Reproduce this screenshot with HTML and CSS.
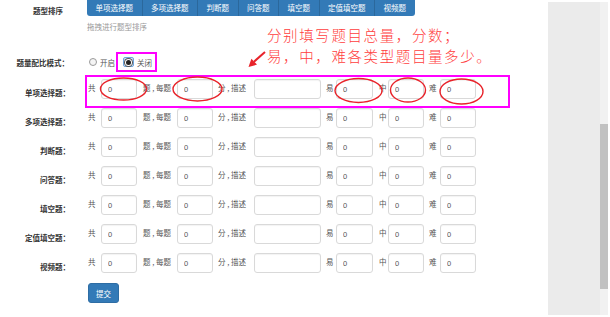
FILE: index.html
```html
<!DOCTYPE html>
<html lang="zh">
<head>
<meta charset="utf-8">
<title>题量配比</title>
<link rel="stylesheet" href="styles.css">
</head>
<body>
<div class="page">
  <main class="content">
    <div class="sort-row">
      <div class="label label-sort">题型排序</div>
      <div class="tabs">
        <span class="tab tab-first">单项选择题</span>
        <span class="tab">多项选择题</span>
        <span class="tab">判断题</span>
        <span class="tab">问答题</span>
        <span class="tab">填空题</span>
        <span class="tab">定值填空题</span>
        <span class="tab tab-last">视频题</span>
      </div>
    </div>
    <div class="hint">拖拽进行题型排序</div>

    <div class="mode-row">
      <div class="label label-mode">题量配比模式：</div>
      <div class="radios">
        <span class="radio-opt"><span class="radio"></span>开启</span>
        <span class="radio-opt"><span class="radio radio-checked"><span class="radio-dot"></span></span>关闭</span>
      </div>
    </div>

    <div class="rows">
      <div class="form-row">
        <div class="label">单项选择题：</div>
        <div class="fields">
          <span class="t t-gong">共</span><input class="in in-num" value="0"><span class="t t-per">题 , 每题</span><input class="in in-num" value="0"><span class="t t-desc">分 , 描述</span><input class="in in-desc" value=""><span class="t t-yi">易</span><input class="in in-num in-yi" value="0"><span class="t t-zhong">中</span><input class="in in-num" value="0"><span class="t t-nan">难</span><input class="in in-num" value="0">
        </div>
      </div>
      <div class="form-row">
        <div class="label">多项选择题：</div>
        <div class="fields">
          <span class="t t-gong">共</span><input class="in in-num" value="0"><span class="t t-per">题 , 每题</span><input class="in in-num" value="0"><span class="t t-desc">分 , 描述</span><input class="in in-desc" value=""><span class="t t-yi">易</span><input class="in in-num in-yi" value="0"><span class="t t-zhong">中</span><input class="in in-num" value="0"><span class="t t-nan">难</span><input class="in in-num" value="0">
        </div>
      </div>
      <div class="form-row">
        <div class="label">判断题：</div>
        <div class="fields">
          <span class="t t-gong">共</span><input class="in in-num" value="0"><span class="t t-per">题 , 每题</span><input class="in in-num" value="0"><span class="t t-desc">分 , 描述</span><input class="in in-desc" value=""><span class="t t-yi">易</span><input class="in in-num in-yi" value="0"><span class="t t-zhong">中</span><input class="in in-num" value="0"><span class="t t-nan">难</span><input class="in in-num" value="0">
        </div>
      </div>
      <div class="form-row">
        <div class="label">问答题：</div>
        <div class="fields">
          <span class="t t-gong">共</span><input class="in in-num" value="0"><span class="t t-per">题 , 每题</span><input class="in in-num" value="0"><span class="t t-desc">分 , 描述</span><input class="in in-desc" value=""><span class="t t-yi">易</span><input class="in in-num in-yi" value="0"><span class="t t-zhong">中</span><input class="in in-num" value="0"><span class="t t-nan">难</span><input class="in in-num" value="0">
        </div>
      </div>
      <div class="form-row">
        <div class="label">填空题：</div>
        <div class="fields">
          <span class="t t-gong">共</span><input class="in in-num" value="0"><span class="t t-per">题 , 每题</span><input class="in in-num" value="0"><span class="t t-desc">分 , 描述</span><input class="in in-desc" value=""><span class="t t-yi">易</span><input class="in in-num in-yi" value="0"><span class="t t-zhong">中</span><input class="in in-num" value="0"><span class="t t-nan">难</span><input class="in in-num" value="0">
        </div>
      </div>
      <div class="form-row">
        <div class="label">定值填空题：</div>
        <div class="fields">
          <span class="t t-gong">共</span><input class="in in-num" value="0"><span class="t t-per">题 , 每题</span><input class="in in-num" value="0"><span class="t t-desc">分 , 描述</span><input class="in in-desc" value=""><span class="t t-yi">易</span><input class="in in-num in-yi" value="0"><span class="t t-zhong">中</span><input class="in in-num" value="0"><span class="t t-nan">难</span><input class="in in-num" value="0">
        </div>
      </div>
      <div class="form-row">
        <div class="label">视频题：</div>
        <div class="fields">
          <span class="t t-gong">共</span><input class="in in-num" value="0"><span class="t t-per">题 , 每题</span><input class="in in-num" value="0"><span class="t t-desc">分 , 描述</span><input class="in in-desc" value=""><span class="t t-yi">易</span><input class="in in-num in-yi" value="0"><span class="t t-zhong">中</span><input class="in in-num" value="0"><span class="t t-nan">难</span><input class="in in-num" value="0">
        </div>
      </div>
    </div>

    <div class="actions">
      <button class="btn-submit" type="button">提交</button>
    </div>
  </main>
  <aside class="side"></aside>
  <div class="scrollbar"><div class="thumb"></div></div>

  <div class="annot">
    <svg class="annot-svg" width="610" height="317" viewBox="0 0 610 317">
      <rect x="117" y="53" width="39" height="18" fill="none" stroke="#ff00ff" stroke-width="2"/>
      <rect x="86" y="76" width="423" height="31" fill="none" stroke="#ff00ff" stroke-width="2"/>
      <g fill="none" stroke="#e8232a" stroke-width="1.4">
        <ellipse cx="123.5" cy="89" rx="23" ry="11"/>
        <ellipse cx="197.5" cy="89" rx="24.5" ry="12"/>
        <ellipse cx="358.5" cy="90.5" rx="23.5" ry="12"/>
        <ellipse cx="408" cy="90" rx="17.5" ry="12"/>
        <ellipse cx="461.5" cy="91.5" rx="21.5" ry="12.5"/>
      </g>
      <line x1="265" y1="52" x2="254" y2="61.7" stroke="#e8232a" stroke-width="2"/>
      <polygon points="248.5,67 251.4,58.8 257,64.6" fill="#e8232a"/>
    </svg>
    <div class="annot-text">
      <div class="annot-line">分别填写题目总量，分数；</div>
      <div class="annot-line">易，中，难各类型题目量多少。</div>
    </div>
  </div>
</div>
</body>
</html>
```

FILE: styles.css
```css
html, body {
  margin: 0;
  padding: 0;
  overflow: hidden;
  background: #ffffff;
}

body {
  font-family: "Liberation Sans", "Noto Sans CJK SC", sans-serif;
  font-size: 7.5px;
  color: #333333;
}

.page {
  position: relative;
  display: flex;
  width: 610px;
  height: 317px;
}

.content {
  width: 548px;
  flex: none;
}

.side {
  width: 52px;
  flex: none;
  margin: 2px 0 2px 0;
  background: #ebebeb;
}

.scrollbar {
  width: 8px;
  flex: none;
  margin: 2px 0 2px 0;
  background: #f1f1f1;
}

.thumb {
  margin-top: 122px;
  height: 165px;
  background: #c1c1c1;
}

/* labels */
.label {
  width: 70px;
  flex: none;
  text-align: right;
  font-weight: bold;
  color: #333333;
  font-family: "Noto Sans CJK SC", sans-serif;
}

/* sort row */
.sort-row {
  display: flex;
  height: 16px;
}

.label-sort {
  padding-top: 5px;
  width: 63px;
  margin-right: 24px;
}

.tabs {
  display: flex;
  height: 16px;
}

.tab {
  background: #337ab7;
  color: #ffffff;
  font-family: "Noto Sans CJK SC", sans-serif;
  line-height: 15px;
  height: 16px;
  padding: 0 8.5px;
  border-left: 1px solid #2b689c;
  box-sizing: border-box;
}

.tab-first {
  border-left: none;
  border-bottom-left-radius: 3px;
}

.tab-last {
  border-bottom-right-radius: 3px;
}

.hint {
  margin: 5px 0 0 87px;
  line-height: 12px;
  color: #999999;
  font-family: "Noto Sans CJK SC", sans-serif;
}

/* mode row */
.mode-row {
  display: flex;
  align-items: center;
  height: 20px;
  margin-top: 19px;
}

.label-mode {
  width: 69px;
}

.radios {
  display: flex;
  align-items: center;
  margin-left: 20px;
  font-family: "Noto Sans CJK SC", sans-serif;
  color: #555555;
}

.radio-opt {
  display: flex;
  align-items: center;
  gap: 3px;
  margin-right: 8px;
}

.radio {
  width: 8px;
  height: 8px;
  box-sizing: border-box;
  border: 1px solid #9a9a9a;
  border-radius: 50%;
  background: #f4f4f4;
}

.radio-checked {
  width: 11px;
  height: 10px;
  border-radius: 2px;
  border: 1px solid #6fa6dc;
  background: #d6e6f6;
  display: flex;
  align-items: center;
  justify-content: center;
}

.radio-dot {
  width: 5px;
  height: 5px;
  border-radius: 50%;
  background: #222222;
  box-shadow: 0 0 0 1px #ffffff, 0 0 0 2px #555555;
}

/* rows */
.rows {
  display: flex;
  flex-direction: column;
  gap: 9px;
  margin-top: 7px;
}

.form-row {
  display: flex;
  align-items: center;
  height: 20px;
}

.form-row .label {
  padding-top: 6px;
}

.fields {
  display: flex;
  align-items: center;
  margin-left: 18px;
}

.t {
  flex: none;
  box-sizing: border-box;
  color: #555555;
  margin-bottom: 4px;
  white-space: nowrap;
  font-family: "Noto Sans CJK SC", sans-serif;
}

.t-gong { width: 13px; }
.t-per { width: 40px; padding-left: 6px; }
.t-desc { width: 41px; padding-left: 5px; }
.t-yi { width: 15px; padding-left: 5px; }
.t-zhong { width: 15px; padding-left: 6px; }
.t-nan { width: 16px; padding-left: 5px; }

.in {
  flex: none;
  box-sizing: border-box;
  height: 20px;
  margin: 0;
  padding: 0 0 0 6px;
  border: 1px solid #d9d9d9;
  border-radius: 3px;
  background: #ffffff;
  font-family: "Liberation Sans", sans-serif;
  font-size: 7.5px;
  color: #555555;
  box-shadow: inset 0 1px 1px rgba(0, 0, 0, 0.05);
}

.in-num { width: 36px; }
.in-yi { width: 37px; }
.in-desc { width: 67px; }

/* submit */
.actions {
  margin: 10px 0 0 88px;
}

.btn-submit {
  width: 31px;
  height: 20px;
  padding: 0;
  border: 1px solid #2e6da4;
  border-radius: 3px;
  background: #337ab7;
  color: #ffffff;
  font-family: "Noto Sans CJK SC", sans-serif;
  font-size: 7.5px;
}

/* annotation overlay */
.annot {
  position: absolute;
  left: 0;
  top: 0;
  width: 610px;
  height: 317px;
  pointer-events: none;
}

.annot-svg {
  position: absolute;
  left: 0;
  top: 0;
}

.annot-text {
  position: absolute;
  left: 267px;
  top: 24px;
  font-family: "Noto Sans CJK SC", sans-serif;
  font-weight: 300;
  font-size: 14.5px;
  letter-spacing: 1.6px;
  color: #ff3d3d;
  white-space: nowrap;
}

.annot-line {
  line-height: 21px;
  height: 21px;
}
```
